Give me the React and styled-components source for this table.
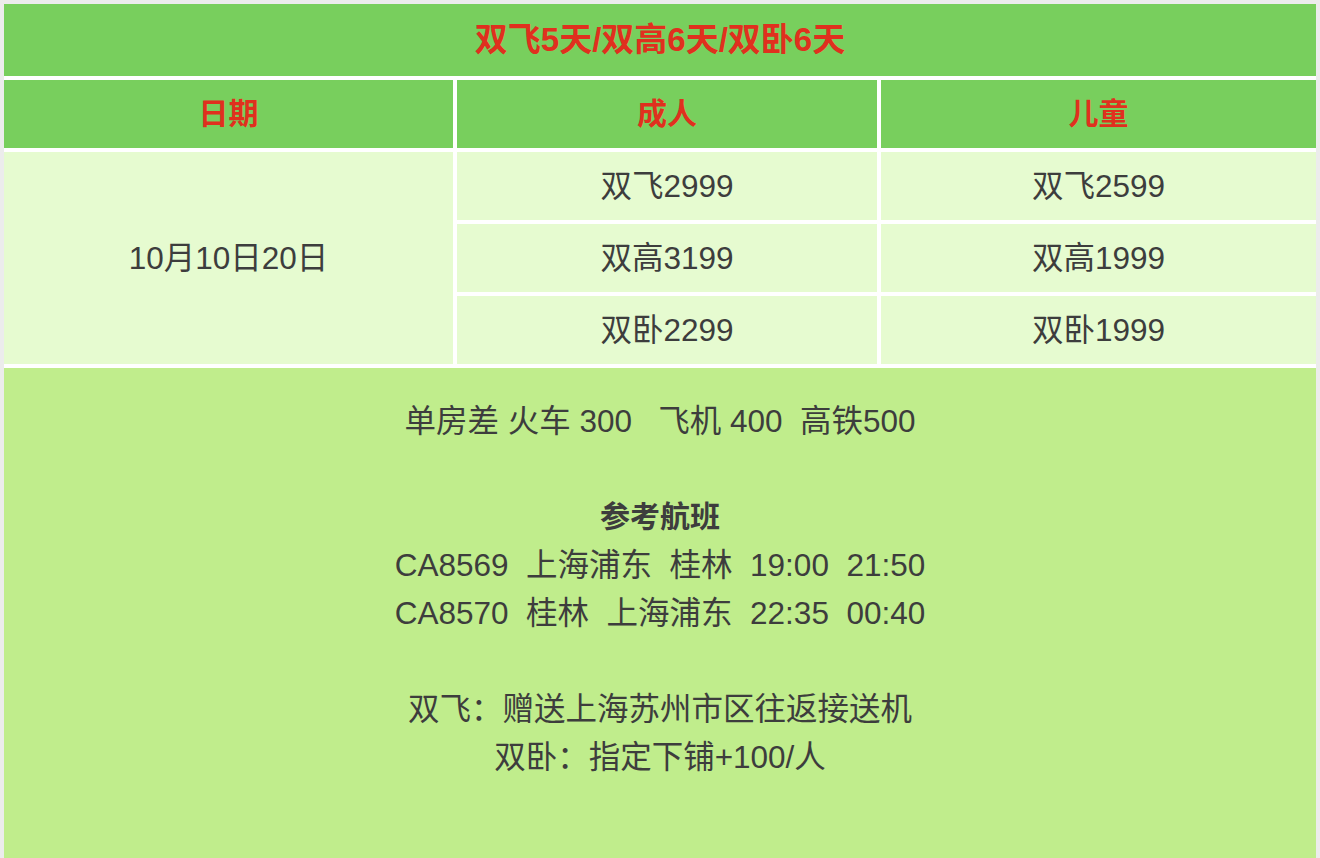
import React from 'react';
import styled, { createGlobalStyle } from 'styled-components';

const GlobalStyle = createGlobalStyle`
  html, body {
    margin: 0;
    padding: 0;
    background: #ececec;
  }
  body {
    font-family: "Liberation Sans", Arial, "Noto Sans CJK SC", sans-serif;
  }
`;

const Page = styled.div`
  padding: 4px;
`;

const Table = styled.table`
  width: 100%;
  border-collapse: separate;
  border-spacing: 0;
  background: #ffffff;
  table-layout: fixed;
`;

const Cell = styled.td`
  padding: 0;
  box-sizing: border-box;
  height: 72px;
  text-align: center;
  vertical-align: middle;
  font-size: 31.5px;
  line-height: 1.15;
  color: #3d3d3d;
  background: #e6fbd0;
  border-left: ${(p) => (p.$first ? 0 : 4)}px solid #fff;
  border-top: ${(p) => (p.$top ? 0 : 4)}px solid #fff;
`;

const HeadCell = styled(Cell).attrs({ as: 'th' })`
  color: #e0301e;
  font-weight: bold;
  font-size: ${(p) => p.$size || 30}px;
  background: #78cf5d;
`;

const NoteCell = styled.td`
  padding: 29px 0 60px;
  border-top: 4px solid #fff;
  background: #c0ed8c;
  text-align: center;
  color: #3d3d3d;
  font-size: 31.5px;
  line-height: 48px;
`;

const Line = styled.div`
  white-space: pre;
  font-weight: ${(p) => (p.$bold ? 'bold' : 'normal')};
  font-size: ${(p) => (p.$bold ? 30 : 31.5)}px;
  min-height: 48px;
`;

const prices = [
  ['双飞2999', '双飞2599'],
  ['双高3199', '双高1999'],
  ['双卧2299', '双卧1999'],
];

const notes = [
  { t: '单房差 火车 300   飞机 400  高铁500' },
  { t: '' },
  { t: '参考航班', bold: true },
  { t: 'CA8569  上海浦东  桂林  19:00  21:50' },
  { t: 'CA8570  桂林  上海浦东  22:35  00:40' },
  { t: '' },
  { t: '双飞：赠送上海苏州市区往返接送机' },
  { t: '双卧：指定下铺+100/人' },
  { t: '' },
];

const App = () => {
  return (
    <Page>
      <GlobalStyle />
      <Table>
        <colgroup>
          <col style={{ width: 449 }} />
          <col style={{ width: 424 }} />
          <col style={{ width: 439 }} />
        </colgroup>
        <tbody>
          <tr>
            <HeadCell colSpan={3} $first $top $size={33}>
              双飞5天/双高6天/双卧6天
            </HeadCell>
          </tr>
          <tr>
            <HeadCell $first>日期</HeadCell>
            <HeadCell>成人</HeadCell>
            <HeadCell>儿童</HeadCell>
          </tr>
          {prices.map((row, i) => (
            <tr key={i}>
              {i === 0 && (
                <Cell rowSpan={3} $first>
                  10月10日20日
                </Cell>
              )}
              <Cell>{row[0]}</Cell>
              <Cell>{row[1]}</Cell>
            </tr>
          ))}
          <tr>
            <NoteCell colSpan={3}>
              {notes.map((n, i) => (
                <Line key={i} $bold={n.bold}>
                  {n.t}
                </Line>
              ))}
            </NoteCell>
          </tr>
        </tbody>
      </Table>
    </Page>
  );
};

export default App;
